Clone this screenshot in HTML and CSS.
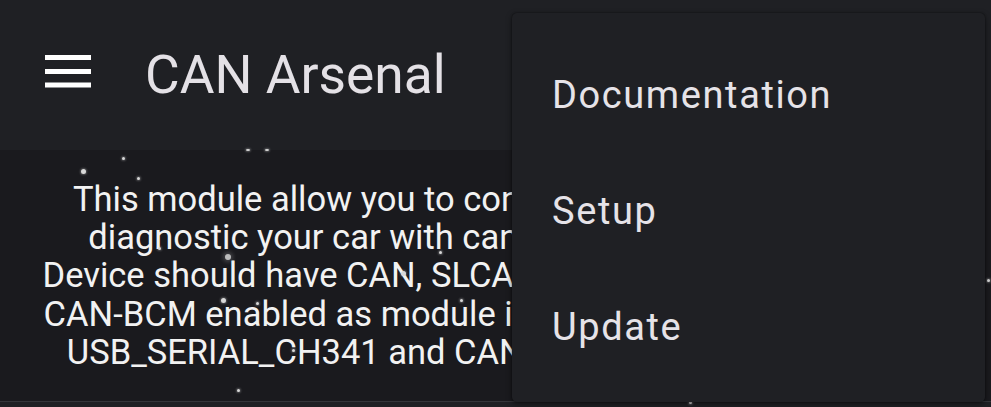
FILE: index.html
```html
<!DOCTYPE html>
<html lang="en">
<head>
<meta charset="utf-8">
<title>CAN Arsenal</title>
<link rel="stylesheet" href="styles.css">
</head>
<body>
<div class="screen">
  <header class="appbar">
    <svg class="menu-icon" width="46" height="33" viewBox="0 0 46 33" aria-hidden="true">
      <rect x="0" y="0" width="46" height="5" fill="#ffffff"/>
      <rect x="0" y="14" width="46" height="5" fill="#ffffff"/>
      <rect x="0" y="27.5" width="46" height="5" fill="#ffffff"/>
    </svg>
    <h1 class="title">CAN Arsenal</h1>
  </header>
  <main class="content">
    <p class="intro">This module allow you to control, monitor, sniff, and to<br>diagnostic your car with can-bus through USB cable.<br>Device should have CAN, SLCAN, CAN-RAW, CAN-GW, plus<br>CAN-BCM enabled as module in kernel and USB drivers as<br>USB_SERIAL_CH341 and CAN_GS_USB built into kernel</p>
    <span class="star s1"></span>
    <span class="star s2"></span>
    <span class="star s3"></span>
    <span class="star s4"></span>
    <span class="star s5"></span>
    <span class="star s6"></span>
    <span class="star big s7"></span>
    <span class="star s8"></span>
    <span class="star s9"></span>
    <span class="star s10"></span>
    <span class="star s11"></span>
    <span class="star s12"></span>
    <span class="star s13"></span>
    <span class="star s14"></span>
    <span class="star s15"></span>
    <span class="star s16"></span>
  </main>
  <footer class="bottom"></footer>
  <nav class="dropdown">
    <div class="item">Documentation</div>
    <div class="item">Setup</div>
    <div class="item">Update</div>
  </nav>
</div>
</body>
</html>
```

FILE: styles.css
```css
html, body {
  margin: 0;
  padding: 0;
  background: #1a1a1e;
}

body {
  font-family: Roboto, "Noto Sans", sans-serif;
  overflow: hidden;
}

.screen {
  position: relative;
  width: 991px;
  height: 407px;
  overflow: hidden;
  display: flex;
  flex-direction: column;
  background: #1a1a1e;
}

.appbar {
  height: 150px;
  flex: 0 0 150px;
  background: #1f2024;
  display: flex;
  align-items: center;
  padding-left: 45px;
  box-sizing: border-box;
}

.menu-icon {
  flex: 0 0 auto;
  margin-bottom: 8px;
}

.title {
  margin: 0 0 0 54px;
  font-size: 53.3px;
  font-weight: 400;
  color: #e4e1e6;
  letter-spacing: 0;
}

.content {
  position: relative;
  flex: 1 1 auto;
  padding: 30px 58px 0 40px;
  box-sizing: border-box;
}

.intro {
  margin: 0;
  text-align: center;
  white-space: nowrap;
  font-size: 34.5px;
  line-height: 38.2px;
  color: #f2f2f2;
}

.star {
  position: absolute;
  width: 3px;
  height: 3px;
  border-radius: 50%;
  background: #d8d8d8;
  box-shadow: 0 0 2px 1px rgba(255, 255, 255, 0.25);
}

.star.big {
  width: 6px;
  height: 6px;
  background: #bdbdbd;
  box-shadow: 0 0 4px 2px rgba(255, 255, 255, 0.2);
}

.s1 { left: 122px; top: 7px; }
.s2 { left: 81px; top: 19px; width: 5px; height: 5px; }
.s3 { left: 137px; top: 27px; }
.s4 { left: 246px; top: -1px; width: 4px; height: 2px; }
.s5 { left: 265px; top: -1px; width: 4px; height: 2px; }
.s6 { left: 158px; top: 97px; }
.s7 { left: 225px; top: 104px; }
.s8 { left: 401px; top: 121px; width: 5px; height: 5px; }
.s9 { left: 439px; top: 101px; }
.s10 { left: 221px; top: 148px; width: 5px; height: 5px; }
.s11 { left: 256px; top: 152px; }
.s12 { left: 460px; top: 149px; }
.s13 { left: 292px; top: 199px; }
.s14 { left: 237px; top: 239px; }
.s15 { left: 987px; top: 129px; }
.s16 { left: 689px; top: 251px; }

.bottom {
  flex: 0 0 6px;
  height: 6px;
  border-top: 1px solid #34353a;
  background: #1f2024;
  box-sizing: border-box;
}

.dropdown {
  position: absolute;
  left: 512px;
  top: 13px;
  width: 473px;
  height: 389px;
  box-sizing: border-box;
  padding: 23.5px 0 17.5px;
  background: #1f2024;
  border-radius: 5px;
  box-shadow: 0 2px 6px rgba(0, 0, 0, 0.45), 0 0 2px rgba(0, 0, 0, 0.5);
  display: flex;
  flex-direction: column;
}

.item {
  height: 116px;
  flex: 0 0 116px;
  display: flex;
  align-items: center;
  padding-left: 40px;
  font-size: 38px;
  letter-spacing: 1.6px;
  color: #e6e3e8;
}
```
